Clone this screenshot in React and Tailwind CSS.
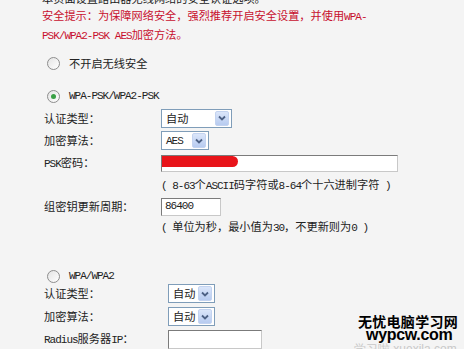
import React from "react";

// ── Helpers ────────────────────────────────────────────────────────────────
// half-width ascii, like the SimSun bitmap glyphs in the router page
const A = ({ children }) => (
  <span className="font-['Liberation_Mono',monospace] text-[11px] tracking-[-1px]">{children}</span>
);

const Radio = ({ checked = false }) => (
  <span className="w-[13px] h-[13px] rounded-full border border-[#8d8d8d] bg-gradient-to-br from-[#e4e4e4] to-white flex items-center justify-center shrink-0">
    {checked && <span className="w-[5px] h-[5px] rounded-full bg-[#3aa046]" />}
  </span>
);

const Select = ({ value, width }) => (
  <div
    className={`${width} h-[19px] border border-[#7f9db9] bg-white flex items-center justify-between pl-[4px] pr-[2px]`}
  >
    <span>{value}</span>
    <span className="w-[14px] h-[15px] rounded-[2px] bg-gradient-to-b from-[#dbe6fa] to-[#b7cbf0] border border-[#c3d3f0] flex items-center justify-center">
      <svg width="8" height="6" viewBox="0 0 8 6">
        <path d="M1 1.5 L4 4.5 L7 1.5" fill="none" stroke="#4d6185" strokeWidth="1.8" />
      </svg>
    </span>
  </div>
);

const Field = ({ width, height = "h-[17px]", children }) => (
  <div
    className={`${width} ${height} relative border border-[#7b7b7b] border-b-[#c8c8c8] border-r-[#c8c8c8] bg-white flex items-center pl-[3px]`}
  >
    {children}
  </div>
);

const Row = ({ label, labelW = "w-[117px]", h = "h-[22px]", children }) => (
  <div className={`flex items-center ${h}`}>
    <div className={`${labelW} shrink-0`}>{label}</div>
    {children}
  </div>
);

export default function App() {
  return (
    <div className="w-[464px] h-[349px] overflow-hidden relative bg-[#f4f4f4] text-[#222] text-[11.2px] font-['Noto_Sans_CJK_SC',sans-serif]">
      <div className="pl-[42px] -mt-[10px]">
        {/* Intro */}
        <div className="leading-[17px]">
          <p>本页面设置路由器无线网络的安全认证选项。</p>
          <p className="text-[#c8102e]">
            安全提示：为保障网络安全，强烈推荐开启安全设置，并使用<A>WPA-</A>
            <br />
            <A>PSK/WPA2-PSK AES</A>加密方法。
          </p>
        </div>

        {/* No security */}
        <div className="mt-[7px] h-[22px] pl-[5px] flex items-center gap-[9px]">
          <Radio />
          <span>不开启无线安全</span>
        </div>

        {/* WPA-PSK */}
        <div className="mt-[11px] h-[22px] pl-[5px] flex items-center gap-[9px]">
          <Radio checked />
          <A>WPA-PSK/WPA2-PSK</A>
        </div>
        <div className="pl-[2px]">
          <Row label="认证类型：">
            <Select value="自动" width="w-[71px]" />
          </Row>
          <Row label="加密算法：" h="h-[23px]">
            <Select value={<A>AES</A>} width="w-[48px]" />
          </Row>
          <Row label={<><A>PSK</A>密码：</>}>
            <Field width="w-[237px]">
              <span className="absolute left-0 top-0 w-[76px] h-[11px] bg-[#e8141a] rounded-r-full rounded-l-[4px]" />
            </Field>
          </Row>
          <Row label="">
            <span>
              <A>( 8-63</A>个<A>ASCII</A>码字符或<A>8-64</A>个十六进制字符<A> )</A>
            </span>
          </Row>
          <Row label="组密钥更新周期：" h="h-[21px]">
            <Field width="w-[60px]" height="h-[18px]">
              <A>86400</A>
            </Field>
          </Row>
          <Row label="" h="h-[21px]">
            <span>
              <A>( </A>单位为秒，最小值为<A>30</A>，不更新则为<A>0 )</A>
            </span>
          </Row>
        </div>

        {/* WPA/WPA2 */}
        <div className="mt-[33px] h-[10px] pl-[5px] flex items-center gap-[9px]">
          <Radio />
          <A>WPA/WPA2</A>
        </div>
        <div className="pl-[2px] mt-[1px]">
          <Row label="认证类型：" labelW="w-[124px]" h="h-[23px]">
            <Select value="自动" width="w-[47px]" />
          </Row>
          <Row label="加密算法：" labelW="w-[124px]" h="h-[23px]">
            <Select value="自动" width="w-[47px]" />
          </Row>
          <Row label={<><A>Radius</A>服务器<A>IP</A>：</>} labelW="w-[124px]" h="h-[23px]">
            <Field width="w-[94px]" height="h-[19px]" />
          </Row>
        </div>
      </div>

      {/* Watermark */}
      <div className="absolute left-[352px] top-[313px] w-[112px] flex flex-col items-center">
        <span className="text-[14px] leading-[17px] font-bold text-black tracking-[0.3px]">无忧电脑学习网</span>
        <span className="text-[#c9c9c9] text-[12px] leading-[12px] mt-[13px] font-['Liberation_Sans',sans-serif] self-start ml-[2px]">学习啦 xuexila.com</span>
        <span className="absolute top-[14px] left-[14px] text-[16px] leading-[16px] font-bold text-black font-['Liberation_Sans',sans-serif] tracking-[-0.3px]">wypcw.com</span>
      </div>
    </div>
  );
}
